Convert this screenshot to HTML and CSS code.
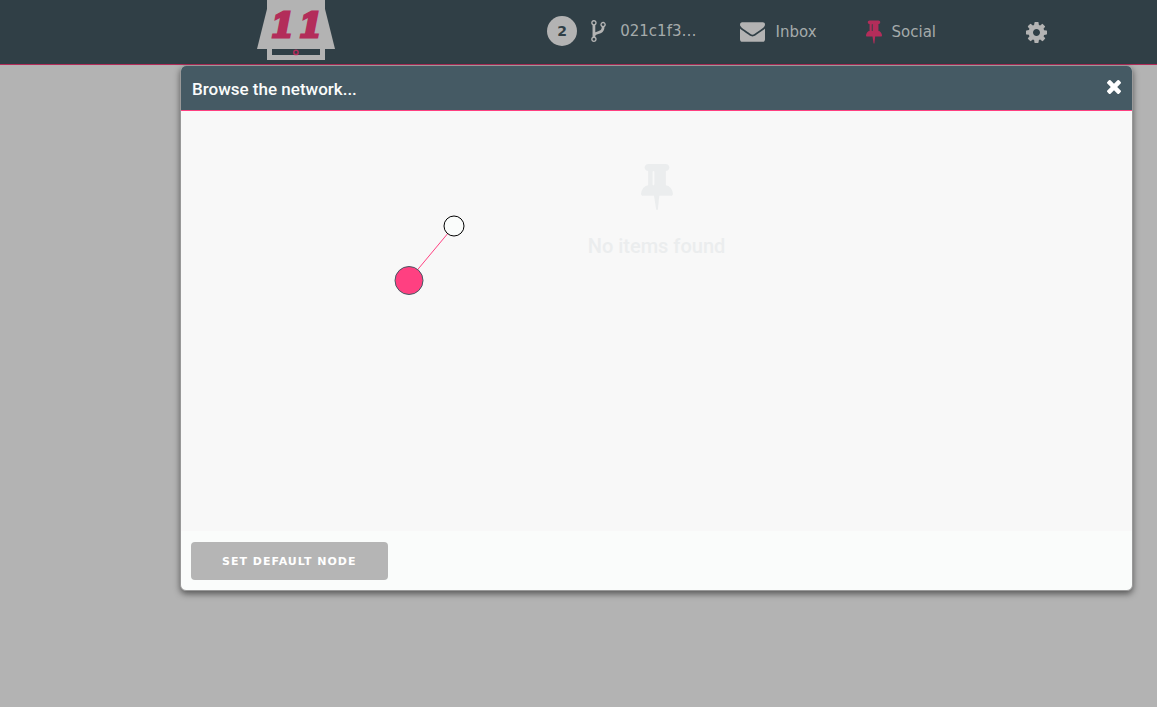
FILE: index.html
```
<!DOCTYPE html>
<html lang="en">
<head>
  <meta charset="UTF-8">
  <title>Browse the network</title>
  <link rel="stylesheet" href="styles.css">
</head>
<body>

  <header class="topbar">
    <a class="logo" href="#" aria-label="Home">
      <svg width="78" height="60" viewBox="0 0 78 60">
        <path class="logo-shape" d="M10 0H68V9L78 49H68V60H10V49H0L10 9Z"/>
        <rect class="logo-slot" x="15" y="49" width="48" height="6"/>
        <circle class="logo-dot" cx="39" cy="52.400" r="2.200"/>
        <text class="logo-text" x="14 42" y="37">11</text>
      </svg>
    </a>

    <nav class="nav">
      <a class="nav-item node" href="#">
        <span class="badge">2</span>
        <svg class="icon" width="15" height="22" viewBox="384 128 1024 1536"><path d="M672 1472q0-40-28-68t-68-28-68 28-28 68 28 68 68 28 68-28 28-68zm0-1152q0-40-28-68t-68-28-68 28-28 68 28 68 68 28 68-28 28-68zm640 128q0-40-28-68t-68-28-68 28-28 68 28 68 68 28 68-28 28-68zm96 0q0 52-26 96.500t-70 69.500q-2 287-226 414-67 38-203 81-128 40-169.500 71t-41.500 100v26q44 25 70 69.500t26 96.500q0 80-56 136t-136 56-136-56-56-136q0-52 26-96.500t70-69.500v-820q-44-25-70-69.500t-26-96.500q0-80 56-136t136-56 136 56 56 136q0 52-26 96.500t-70 69.500v497q54-26 154-57 55-17 87.500-29.500t70.500-31 59-39.500 40.500-51 28-69.500 8.500-91.500q-44-25-70-69.500t-26-96.500q0-80 56-136t136-56 136 56 56 136z"/></svg>
        <span>021c1f3…</span>
      </a>
      <a class="nav-item inbox" href="#">
        <svg class="icon" width="25" height="20" viewBox="0 256 1792 1408"><path d="M1792 710v794q0 66-47 113t-113 47h-1472q-66 0-113-47t-47-113v-794q44 49 101 87 362 246 497 345 57 42 92.500 65.500t94.500 48 110 24.500h2q51 0 110-24.500t94.500-48 92.500-65.500q170-123 498-345 57-39 100-87zm0-294q0 79-49 151t-122 123q-376 261-468 325-10 7-42.500 30.500t-54 38-52 32.500-57.500 27-50 9h-2q-23 0-50-9t-57.500-27-52-32.500-54-38-42.500-30.500q-91-64-262-182.500t-205-142.500q-62-42-117-115.500t-55-136.500q0-78 41.500-130t118.500-52h1472q65 0 112.500 47t47.500 113z"/></svg>
        <span>Inbox</span>
      </a>
      <a class="nav-item social" href="#">
        <svg class="icon icon-pink" width="16" height="24" viewBox="320 128 1152 1664"><path d="M800 864v-448q0-14-9-23t-23-9-23 9-9 23v448q0 14 9 23t23 9 23-9 9-23zm672 352q0 26-19 45t-45 19h-429l-51 483q-2 12-10.500 20.500t-20.500 8.500h-1q-27 0-32-27l-76-485h-404q-26 0-45-19t-19-45q0-123 78.500-221.500t177.500-98.500v-512q-52 0-90-38t-38-90 38-90 90-38h640q52 0 90 38t38 90-38 90-90 38v512q99 0 177.500 98.500t78.500 221.500z"/></svg>
        <span>Social</span>
      </a>
      <a class="nav-item" href="#" aria-label="Settings">
        <svg class="icon" width="21" height="21" viewBox="128 128 1536 1536"><path d="M1152 896q0-106-75-181t-181-75-181 75-75 181 75 181 181 75 181-75 75-181zm512-109v222q0 12-8 23t-20 13l-185 28q-19 54-39 91 35 50 107 138 10 12 10 25t-9 23q-27 37-99 108t-94 71q-12 0-26-9l-138-108q-44 23-91 38-16 136-29 186-7 28-36 28h-222q-14 0-24.500-8.500t-11.500-21.500l-28-184q-49-16-90-37l-141 107q-10 9-25 9-14 0-25-11-126-114-165-168-7-10-7-23 0-12 8-23 15-21 51-66.500t54-70.500q-27-50-41-99l-183-27q-13-2-21-12.500t-8-23.500v-222q0-12 8-23t19-13l186-28q14-46 39-92-40-57-107-138-10-12-10-24 0-10 9-23 26-36 98.500-107.500t94.500-71.500q13 0 26 10l138 107q44-23 91-38 16-136 29-186 7-28 36-28h222q14 0 24.500 8.500t11.500 21.500l28 184q49 16 90 37l142-107q9-9 24-9 13 0 25 10 129 119 165 170 7 8 7 22 0 12-8 23-15 21-51 66.500t-54 70.500q26 50 41 98l183 28q13 2 21 12.500t8 23.500z"/></svg>
      </a>
    </nav>
  </header>

  <section class="modal" role="dialog" aria-labelledby="modal-title">
    <div class="modal-header">
      <h1 class="modal-title" id="modal-title">Browse the network...</h1>
      <button class="close" type="button" aria-label="Close">
        <svg width="14" height="14" viewBox="302 302 1188 1188"><path d="M1490 1258q0 40-28 68l-136 136q-28 28-68 28t-68-28l-294-294-294 294q-28 28-68 28t-68-28l-136-136q-28-28-28-68t28-68l294-294-294-294q-28-28-28-68t28-68l136-136q28-28 68-28t68 28l294 294 294-294q28-28 68-28t68 28l136 136q28 28 28 68t-28 68l-294 294 294 294q28 28 28 68z"/></svg>
      </button>
    </div>

    <div class="modal-body">
      <!-- node graph -->
      <svg class="graph" width="475" height="400">
        <line class="edge" x1="228" y1="169" x2="273" y2="115"/>
        <circle class="peer" cx="273" cy="115" r="10"/>
        <circle class="root" cx="228" cy="169.500" r="14"/>
      </svg>

      <div class="empty">
        <svg width="32" height="46" viewBox="320 128 1152 1664"><path d="M800 864v-448q0-14-9-23t-23-9-23 9-9 23v448q0 14 9 23t23 9 23-9 9-23zm672 352q0 26-19 45t-45 19h-429l-51 483q-2 12-10.500 20.500t-20.500 8.500h-1q-27 0-32-27l-76-485h-404q-26 0-45-19t-19-45q0-123 78.500-221.500t177.500-98.500v-512q-52 0-90-38t-38-90 38-90 90-38h640q52 0 90 38t38 90-38 90-90 38v512q99 0 177.500 98.500t78.500 221.500z"/></svg>
        <p class="empty-text">No items found</p>
      </div>
    </div>

    <div class="modal-footer">
      <button class="btn" type="button">Set default node</button>
    </div>
  </section>

</body>
</html>
```
FILE: styles.css
```
* {
  box-sizing: border-box;
}

body {
  margin: 0;
  min-height: 100vh;
  background: #b3b3b3;
  font-family: 'DejaVu Sans', sans-serif;
  font-size: 15px;
}

.topbar {
  display: flex;
  justify-content: space-between;
  height: 65px;
  padding: 0 110px 0 257px;
  background: #303f46;
  border-bottom: 1px solid #b32d5a;
}

.logo svg {
  display: block;
}

.logo-shape {
  fill: #b3b3b3;
}

.logo-slot {
  fill: #303f46;
}

.logo-dot {
  fill: none;
  stroke: #b32d5a;
  stroke-width: 1.5px;
}

.logo-text {
  font-family: 'DejaVu Serif', serif;
  font-size: 34px;
  font-weight: bold;
  font-style: italic;
  fill: #b32d5a;
  stroke: #b32d5a;
  stroke-width: 3px;
}

.nav {
  display: flex;
  align-items: center;
}

.nav-item {
  display: flex;
  align-items: center;
  color: #a5abab;
  text-decoration: none;
}

.icon {
  margin-right: 10px;
  fill: #b3b3b3;
}

.nav-item:last-child .icon {
  margin-right: 0;
}

.icon-pink {
  fill: #b32d5a;
}

.node {
  margin-right: 44px;
  padding-bottom: 2px;
}

.node .icon {
  margin-right: 14px;
}

.inbox {
  margin-right: 49px;
}

.social {
  margin-right: 90px;
}

.badge {
  width: 30px;
  margin-right: 14px;
  border-radius: 50%;
  background: #b3b3b3;
  color: #303f46;
  font-size: 14px;
  font-weight: bold;
  line-height: 30px;
  text-align: center;
}

.modal {
  margin: 0 24px 0 180px;
  border: 1px solid #999;
  border-radius: 6px;
  background: #fafcfb;
  box-shadow: 0 3px 6px rgba(0, 0, 0, 0.5);
  overflow: hidden;
}

.modal-header {
  display: flex;
  align-items: center;
  justify-content: space-between;
  height: 45px;
  padding: 0 11px;
  background: #455a64;
  border-bottom: 1px solid #ff4081;
}

.modal-title {
  margin: 0;
  padding-top: 2px;
  color: #fafcfb;
  font-family: Roboto, sans-serif;
  font-size: 17px;
  font-weight: 500;
}

.close {
  padding: 0 0 2px;
  border: 0;
  background: none;
  cursor: pointer;
}

.close svg {
  display: block;
  fill: #fff;
}

.modal-body {
  position: relative;
  height: 420px;
  padding-top: 53px;
  background: #f8f8f8;
}

.graph {
  position: absolute;
  top: 0;
  left: 0;
}

.edge {
  stroke: #ff4081;
}

.peer {
  fill: #fafcfb;
  stroke: #000;
}

.root {
  fill: #ff4081;
  stroke: #455a64;
}

.empty {
  text-align: center;
}

.empty svg {
  display: block;
  margin: 0 auto;
  fill: #ebedee;
}

.empty-text {
  margin: 24px 0 0;
  color: #ebedee;
  font-family: Roboto, sans-serif;
  font-size: 20px;
  font-weight: 500;
  line-height: 24px;
}

.modal-footer {
  padding: 11px 10px 10px;
}

.btn {
  display: block;
  height: 38px;
  padding: 0 31px;
  border: 0;
  border-radius: 4px;
  background: #b5b5b5;
  color: #fff;
  font-family: inherit;
  font-size: 11px;
  font-weight: bold;
  letter-spacing: 1px;
  text-transform: uppercase;
  cursor: pointer;
}
```
